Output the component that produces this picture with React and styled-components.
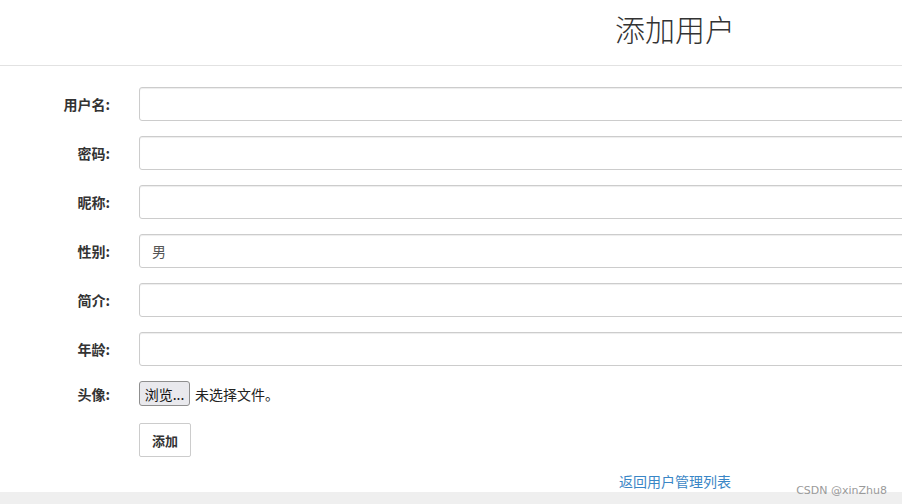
import React from "react";
import styled, { createGlobalStyle } from "styled-components";

const Global = createGlobalStyle`
  html, body { margin: 0; padding: 0; background: #fff; overflow: hidden; }
  body { font-family: "Noto Sans CJK SC", "Liberation Sans", sans-serif; color: #333; }
`;

const Page = styled.div`
  width: 902px;
  height: 504px;
  overflow: hidden;
  position: relative;
  display: flex;
  flex-direction: column;
`;

const Header = styled.header`
  height: 65px;
  border-bottom: 1px solid #e2e2e2;
  flex-shrink: 0;
`;

const Centered = styled.div`
  width: 1350px;
  text-align: center;
`;

const Title = styled.h1`
  margin: 0;
  padding-top: 9px;
  font-size: 30px;
  line-height: 38px;
  font-weight: 300;
  color: #333;
`;

const Form = styled.form`
  display: grid;
  grid-template-columns: 110px 900px;
  column-gap: 29px;
  row-gap: 15px;
  padding-top: 21px;
  align-items: center;
`;

const Label = styled.label`
  text-align: right;
  font-size: 14px;
  font-weight: 700;
  color: #333;
  white-space: nowrap;
`;

const Input = styled.div`
  box-sizing: border-box;
  height: 34px;
  border: 1px solid #ccc;
  border-radius: 3px;
  box-shadow: inset 0 1px 1px rgba(0, 0, 0, 0.075);
  padding: 0 12px;
  display: flex;
  align-items: center;
  font-size: 14px;
  color: #555;
`;

const FileRow = styled.div`
  display: flex;
  align-items: center;
  gap: 5px;
  height: 25px;
  font-size: 14px;
  color: #222;
`;

const BrowseButton = styled.button`
  box-sizing: border-box;
  height: 25px;
  width: 51px;
  padding: 0;
  border: 1px solid #8f8f8f;
  border-radius: 3px;
  background: #e9e9ed;
  font-family: inherit;
  font-size: 14px;
  color: #111;
`;

const Spacer = styled.div``;

const SubmitButton = styled.button`
  box-sizing: border-box;
  width: 52px;
  height: 34px;
  margin-top: 2px;
  border: 1px solid #ccc;
  border-radius: 2px;
  background: #fff;
  font-family: inherit;
  font-size: 13px;
  font-weight: 700;
  color: #333;
`;

const LinkRow = styled.div`
  padding-top: 11px;
`;

const BackLink = styled.a`
  font-size: 14px;
  line-height: 18px;
  color: #3a86c6;
  text-decoration: none;
`;

const Footer = styled.footer`
  margin-top: auto;
  height: 13px;
  background: #efefef;
  flex-shrink: 0;
`;

const Watermark = styled.div`
  position: absolute;
  right: 15px;
  bottom: 7px;
  font-family: "DejaVu Sans", "Liberation Sans", sans-serif;
  font-size: 11px;
  color: #9a9a9a;
`;

const fields = [
  { label: "用户名:", value: "" },
  { label: "密码:", value: "" },
  { label: "昵称:", value: "" },
  { label: "性别:", value: "男" },
  { label: "简介:", value: "" },
  { label: "年龄:", value: "" },
];

export default function App() {
  return (
    <>
      <Global />
      <Page>
        <Header>
          <Centered>
            <Title>添加用户</Title>
          </Centered>
        </Header>
        <Form onSubmit={(e) => e.preventDefault()}>
          {fields.map((f) => (
            <React.Fragment key={f.label}>
              <Label>{f.label}</Label>
              <Input>{f.value}</Input>
            </React.Fragment>
          ))}
          <Label>头像:</Label>
          <FileRow>
            <BrowseButton type="button">浏览...</BrowseButton>
            <span>未选择文件。</span>
          </FileRow>
          <Spacer />
          <SubmitButton type="submit">添加</SubmitButton>
        </Form>
        <LinkRow>
          <Centered>
            <BackLink href="#">返回用户管理列表</BackLink>
          </Centered>
        </LinkRow>
        <Footer />
        <Watermark>CSDN @xinZhu8</Watermark>
      </Page>
    </>
  );
}
